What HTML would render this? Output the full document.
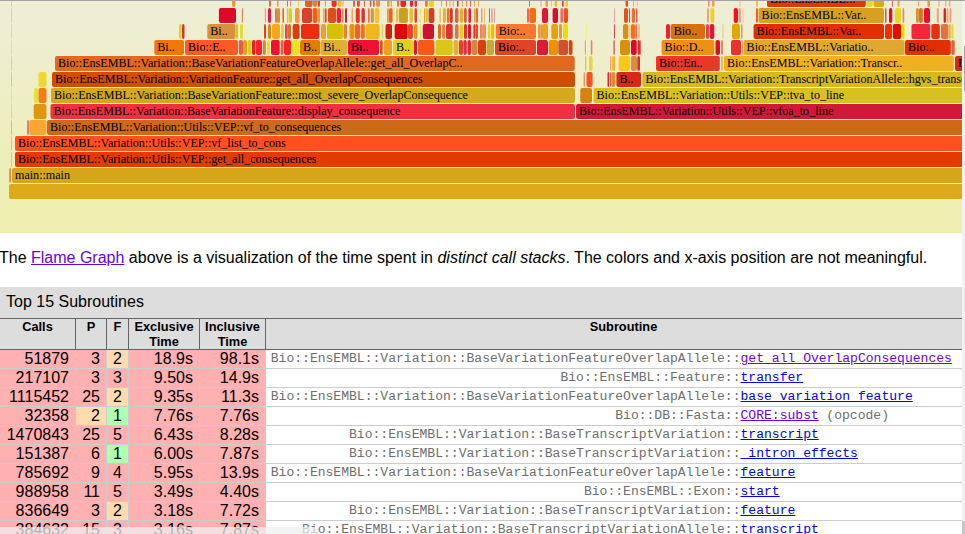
<!DOCTYPE html>
<html><head><meta charset="utf-8">
<style>
html,body{margin:0;padding:0;background:#fff;}
body{width:965px;height:534px;overflow:hidden;position:relative;font-family:"Liberation Sans",sans-serif;}
#topline{position:absolute;left:0;top:0;width:965px;z-index:5;height:1px;background:#a3a3a7;}
#fg{position:absolute;left:0;top:0;overflow:hidden;}
#fg text{font-family:"Liberation Serif",serif;font-size:12.08px;fill:#000;}
#para{position:absolute;left:-1px;top:249px;font-size:16px;line-height:18px;white-space:nowrap;color:#000;}
#para a{color:#6a00ea;text-decoration:underline;}
#caption{position:absolute;left:0;top:287px;width:962px;height:31px;background:#dddddd;}
#caption span{position:absolute;left:6px;top:6px;font-size:16px;line-height:18px;white-space:nowrap;color:#000;}
#thead{position:absolute;left:0;top:318px;width:962px;height:32px;background:#dddddd;}
.hb{position:absolute;left:0;width:962px;height:1px;background:#646464;}
.vb{position:absolute;top:318px;width:1px;height:32px;background:#646464;}
.th{position:absolute;top:320px;font-size:12.8px;font-weight:bold;line-height:14.5px;text-align:center;color:#000;}
.cell{position:absolute;}
.num{position:absolute;top:0px;font-size:16px;line-height:18px;white-space:nowrap;color:#000;}
.sub{position:absolute;left:266px;width:696px;background:#fff;}
.sub .pkg{position:absolute;right:221.5px;top:1px;font-family:"Liberation Mono",monospace;font-size:13.05px;line-height:16px;color:#6e6e6e;white-space:nowrap;}
.sub .lnk,.sub .vis{position:absolute;left:474.5px;top:1px;font-family:"Liberation Mono",monospace;font-size:13.05px;line-height:16px;text-decoration:underline;white-space:nowrap;}
.sub .op{position:absolute;top:1px;font-family:"Liberation Mono",monospace;font-size:13.05px;line-height:16px;color:#6e6e6e;white-space:pre;}
.lnk{color:#0000ee;} .vis{color:#6a00ea;}
.gl{position:absolute;left:0;width:962px;height:1px;background:#cccccc;}
.vgl{position:absolute;top:350px;width:1px;height:184px;background:#cccccc;}
#sb{position:absolute;left:962px;top:0;width:3px;height:534px;background:#f1f1f1;}
#sbt1{position:absolute;left:964px;top:46px;width:1px;height:45px;background:#a8a8a8;}
#sbt2{position:absolute;left:962px;top:521px;width:3px;height:13px;background:#c6c6c6;}
#bubble{position:absolute;left:0;top:527px;width:318px;height:7px;background:rgba(239,239,239,0.75);}
</style></head><body>
<svg id="fg" width="962" height="233">
<defs><linearGradient id="bg" x1="0" y1="0" x2="0" y2="233" gradientUnits="userSpaceOnUse">
<stop offset="0" stop-color="#eeeed8"/><stop offset="0.93" stop-color="#eeeeb0"/><stop offset="1" stop-color="#eeeeb0"/></linearGradient></defs>
<rect x="0" y="1" width="962" height="232" fill="url(#bg)"/>
<rect x="9" y="184" width="957.00" height="15" rx="2" ry="2" fill="#dcaa18"/>
<rect x="9.3" y="168" width="1.50" height="15" rx="2" ry="2" fill="#e87040"/>
<rect x="12" y="168" width="954.00" height="15" rx="2" ry="2" fill="#d4a618"/>
<text x="15.0" y="178.5">main::main</text>
<rect x="11" y="152" width="1.00" height="15" rx="2" ry="2" fill="#f09060" fill-opacity="0.55"/>
<rect x="15" y="152" width="951.00" height="15" rx="2" ry="2" fill="#e03c00"/>
<text x="18.0" y="162.5">Bio::EnsEMBL::Variation::Utils::VEP::get_all_consequences</text>
<rect x="11" y="136" width="1.00" height="15" rx="2" ry="2" fill="#f08070" fill-opacity="0.55"/>
<rect x="15" y="136" width="951.00" height="15" rx="2" ry="2" fill="#ff5020"/>
<text x="18.0" y="146.5">Bio::EnsEMBL::Variation::Utils::VEP::vf_list_to_cons</text>
<rect x="11" y="120" width="1.00" height="15" rx="2" ry="2" fill="#f07070" fill-opacity="0.55"/>
<rect x="27.2" y="120" width="1.60" height="15" rx="2" ry="2" fill="#f06040"/>
<rect x="29.3" y="120" width="17.20" height="15" rx="2" ry="2" fill="#f8a830"/>
<rect x="47" y="120" width="919.00" height="15" rx="2" ry="2" fill="#cc6a18"/>
<text x="50.0" y="130.5">Bio::EnsEMBL::Variation::Utils::VEP::vf_to_consequences</text>
<rect x="11" y="104" width="1.00" height="15" rx="2" ry="2" fill="#f0b070" fill-opacity="0.55"/>
<rect x="33.7" y="104" width="12.80" height="15" rx="2" ry="2" fill="#e0960f"/>
<rect x="50.5" y="104" width="524.50" height="15" rx="2" ry="2" fill="#f03040"/>
<text x="53.5" y="114.5">Bio::EnsEMBL::Variation::BaseVariationFeature::display_consequence</text>
<rect x="576" y="104" width="390.00" height="15" rx="2" ry="2" fill="#d01838"/>
<text x="579.0" y="114.5">Bio::EnsEMBL::Variation::Utils::VEP::vfoa_to_line</text>
<rect x="11" y="88" width="1.00" height="15" rx="2" ry="2" fill="#f0d070" fill-opacity="0.55"/>
<rect x="34.2" y="88" width="3.80" height="15" rx="2" ry="2" fill="#e8e020"/>
<rect x="38.5" y="88" width="8.00" height="15" rx="2" ry="2" fill="#f87c10"/>
<rect x="51" y="88" width="524.00" height="15" rx="2" ry="2" fill="#d4aa1c"/>
<text x="54.0" y="98.5">Bio::EnsEMBL::Variation::BaseVariationFeature::most_severe_OverlapConsequence</text>
<rect x="580.3" y="88" width="11.70" height="15" rx="2" ry="2" fill="#d88010"/>
<rect x="593.5" y="88" width="372.50" height="15" rx="2" ry="2" fill="#d8c020"/>
<text x="596.5" y="98.5">Bio::EnsEMBL::Variation::Utils::VEP::tva_to_line</text>
<rect x="11" y="72" width="1.00" height="15" rx="2" ry="2" fill="#f09070" fill-opacity="0.55"/>
<rect x="38.5" y="72" width="8.00" height="15" rx="2" ry="2" fill="#f0d830"/>
<rect x="52" y="72" width="523.00" height="15" rx="2" ry="2" fill="#d04e00"/>
<text x="55.0" y="82.5">Bio::EnsEMBL::Variation::VariationFeature::get_all_OverlapConsequences</text>
<rect x="583.6" y="72" width="1.40" height="15" rx="2" ry="2" fill="#f09060"/>
<rect x="586.5" y="72" width="6.10" height="15" rx="2" ry="2" fill="#f85020"/>
<rect x="607.5" y="72" width="1.70" height="15" rx="2" ry="2" fill="#e02030"/>
<rect x="610" y="72" width="1.00" height="15" rx="2" ry="2" fill="#e06030"/>
<rect x="611.2" y="72" width="4.10" height="15" rx="2" ry="2" fill="#d89030"/>
<rect x="616.4" y="72" width="24.60" height="15" rx="2" ry="2" fill="#d82818"/>
<text x="619.4" y="82.5">B..</text>
<rect x="642.5" y="72" width="323.50" height="15" rx="2" ry="2" fill="#d8b820"/>
<text x="645.5" y="82.5">Bio::EnsEMBL::Variation::TranscriptVariationAllele::hgvs_transcript</text>
<rect x="11" y="56" width="1.00" height="15" rx="2" ry="2" fill="#f0a070" fill-opacity="0.55"/>
<rect x="55" y="56" width="519.70" height="15" rx="2" ry="2" fill="#e06820"/>
<text x="58.0" y="66.5">Bio::EnsEMBL::Variation::BaseVariationFeatureOverlapAllele::get_all_OverlapC..</text>
<rect x="585" y="56" width="1.40" height="15" rx="2" ry="2" fill="#f0c040"/>
<rect x="589" y="56" width="3.60" height="15" rx="2" ry="2" fill="#e0d840"/>
<rect x="610" y="56" width="1.00" height="15" rx="2" ry="2" fill="#f0a080"/>
<rect x="611.6" y="56" width="1.40" height="15" rx="2" ry="2" fill="#f0c040"/>
<rect x="613" y="56" width="2.30" height="15" rx="2" ry="2" fill="#e8b830"/>
<rect x="618.7" y="56" width="11.20" height="15" rx="2" ry="2" fill="#f8c818"/>
<rect x="630.8" y="56" width="6.20" height="15" rx="2" ry="2" fill="#d89040"/>
<rect x="637.3" y="56" width="2.70" height="15" rx="2" ry="2" fill="#e02838"/>
<rect x="656" y="56" width="63.80" height="15" rx="2" ry="2" fill="#e83828"/>
<text x="659.0" y="66.5">Bio::En..</text>
<rect x="721" y="56" width="2.00" height="15" rx="2" ry="2" fill="#e0c060"/>
<rect x="724" y="56" width="229.80" height="15" rx="2" ry="2" fill="#f0b020"/>
<text x="727.0" y="66.5">Bio::EnsEMBL::Variation::Transcr..</text>
<rect x="955" y="56" width="20.00" height="15" rx="2" ry="2" fill="#d82818"/>
<text x="958.0" y="66.5">Bio::..</text>
<rect x="11" y="40" width="1.00" height="15" rx="2" ry="2" fill="#f0c080" fill-opacity="0.55"/>
<rect x="154.3" y="40" width="29.70" height="15" rx="2" ry="2" fill="#f07800"/>
<text x="157.3" y="50.5">Bi..</text>
<rect x="185" y="40" width="53.00" height="15" rx="2" ry="2" fill="#ff5a28"/>
<text x="188.0" y="50.5">Bio::E..</text>
<rect x="238.8" y="40" width="4.20" height="15" rx="2" ry="2" fill="#e86040"/>
<rect x="243" y="40" width="4.00" height="15" rx="2" ry="2" fill="#e8a020"/>
<rect x="247.6" y="40" width="4.10" height="15" rx="2" ry="2" fill="#d8d020"/>
<rect x="252" y="40" width="3.40" height="15" rx="2" ry="2" fill="#e02010"/>
<rect x="255.8" y="40" width="6.20" height="15" rx="2" ry="2" fill="#ff2030"/>
<rect x="262.8" y="40" width="3.20" height="15" rx="2" ry="2" fill="#d09040"/>
<rect x="267" y="40" width="3.00" height="15" rx="2" ry="2" fill="#e8e020"/>
<rect x="271" y="40" width="8.70" height="15" rx="2" ry="2" fill="#f01030"/>
<rect x="280.7" y="40" width="2.80" height="15" rx="2" ry="2" fill="#e86040"/>
<rect x="284" y="40" width="7.00" height="15" rx="2" ry="2" fill="#ff2020"/>
<rect x="292" y="40" width="7.00" height="15" rx="2" ry="2" fill="#f0e020"/>
<rect x="300" y="40" width="20.00" height="15" rx="2" ry="2" fill="#e07e00"/>
<text x="303.0" y="50.5">B..</text>
<rect x="320.3" y="40" width="26.90" height="15" rx="2" ry="2" fill="#e0b030"/>
<text x="323.3" y="50.5">Bi..</text>
<rect x="348" y="40" width="31.00" height="15" rx="2" ry="2" fill="#f01038"/>
<text x="351.0" y="50.5">Bi..</text>
<rect x="380" y="40" width="2.70" height="15" rx="2" ry="2" fill="#e85010"/>
<rect x="383.8" y="40" width="8.20" height="15" rx="2" ry="2" fill="#f0a020"/>
<rect x="393" y="40" width="20.00" height="15" rx="2" ry="2" fill="#e0d020"/>
<text x="396.0" y="50.5">B..</text>
<rect x="413.7" y="40" width="3.30" height="15" rx="2" ry="2" fill="#d81838"/>
<rect x="418" y="40" width="16.40" height="15" rx="2" ry="2" fill="#f85818"/>
<rect x="435.6" y="40" width="17.10" height="15" rx="2" ry="2" fill="#d8c818"/>
<rect x="453.5" y="40" width="5.00" height="15" rx="2" ry="2" fill="#e0b040"/>
<rect x="459" y="40" width="4.00" height="15" rx="2" ry="2" fill="#e84020"/>
<rect x="463.4" y="40" width="3.40" height="15" rx="2" ry="2" fill="#e03040"/>
<rect x="467.6" y="40" width="3.40" height="15" rx="2" ry="2" fill="#f02030"/>
<rect x="471.7" y="40" width="5.90" height="15" rx="2" ry="2" fill="#d08840"/>
<rect x="478" y="40" width="8.00" height="15" rx="2" ry="2" fill="#d84010"/>
<rect x="486.6" y="40" width="7.40" height="15" rx="2" ry="2" fill="#c8a838"/>
<rect x="495" y="40" width="41.00" height="15" rx="2" ry="2" fill="#e04428"/>
<text x="498.0" y="50.5">Bio:..</text>
<rect x="537" y="40" width="11.00" height="15" rx="2" ry="2" fill="#e01838"/>
<rect x="548.8" y="40" width="9.20" height="15" rx="2" ry="2" fill="#f09000"/>
<rect x="558.3" y="40" width="9.70" height="15" rx="2" ry="2" fill="#d05030"/>
<rect x="568.7" y="40" width="3.80" height="15" rx="2" ry="2" fill="#d84010"/>
<rect x="584.8" y="40" width="1.20" height="15" rx="2" ry="2" fill="#f0a080"/>
<rect x="590.8" y="40" width="1.60" height="15" rx="2" ry="2" fill="#f08060"/>
<rect x="613.5" y="40" width="1.20" height="15" rx="2" ry="2" fill="#e04040"/>
<rect x="620" y="40" width="10.00" height="15" rx="2" ry="2" fill="#d89010"/>
<rect x="631" y="40" width="5.70" height="15" rx="2" ry="2" fill="#e00828"/>
<rect x="637.5" y="40" width="2.50" height="15" rx="2" ry="2" fill="#e03020"/>
<rect x="640" y="40" width="1.00" height="15" rx="2" ry="2" fill="#f06060"/>
<rect x="661.6" y="40" width="52.70" height="15" rx="2" ry="2" fill="#f09010"/>
<text x="664.6" y="50.5">Bio::D..</text>
<rect x="715.5" y="40" width="4.50" height="15" rx="2" ry="2" fill="#e01020"/>
<rect x="721" y="40" width="2.00" height="15" rx="2" ry="2" fill="#f08060"/>
<rect x="731" y="40" width="10.00" height="15" rx="2" ry="2" fill="#f03030"/>
<rect x="742" y="40" width="1.00" height="15" rx="2" ry="2" fill="#f0a040"/>
<rect x="743.6" y="40" width="161.00" height="15" rx="2" ry="2" fill="#e0a830"/>
<text x="746.6" y="50.5">Bio::EnsEMBL::Variatio..</text>
<rect x="905" y="40" width="45.80" height="15" rx="2" ry="2" fill="#e03000"/>
<text x="908.0" y="50.5">Bio:..</text>
<rect x="951.3" y="40" width="3.40" height="15" rx="2" ry="2" fill="#e06040"/>
<rect x="11" y="24" width="1.00" height="15" rx="2" ry="2" fill="#f0b090" fill-opacity="0.55"/>
<rect x="179" y="24" width="2.50" height="15" rx="2" ry="2" fill="#e0d020"/>
<rect x="182" y="24" width="2.50" height="15" rx="2" ry="2" fill="#e03030"/>
<rect x="207.3" y="24" width="28.20" height="15" rx="2" ry="2" fill="#d89040"/>
<text x="210.3" y="34.5">Bi..</text>
<rect x="236" y="24" width="2.00" height="15" rx="2" ry="2" fill="#d8c020"/>
<rect x="240" y="24" width="3.00" height="15" rx="2" ry="2" fill="#e0e030"/>
<rect x="264" y="24" width="2.00" height="15" rx="2" ry="2" fill="#e04020"/>
<rect x="268" y="24" width="3.00" height="15" rx="2" ry="2" fill="#e08020"/>
<rect x="272" y="24" width="8.00" height="15" rx="2" ry="2" fill="#f8a818"/>
<rect x="281" y="24" width="3.00" height="15" rx="2" ry="2" fill="#d8d840"/>
<rect x="285" y="24" width="2.70" height="15" rx="2" ry="2" fill="#e84060"/>
<rect x="288" y="24" width="3.00" height="15" rx="2" ry="2" fill="#d87020"/>
<rect x="292.7" y="24" width="6.90" height="15" rx="2" ry="2" fill="#d84010"/>
<rect x="301" y="24" width="18.40" height="15" rx="2" ry="2" fill="#e83010"/>
<rect x="321" y="24" width="5.00" height="15" rx="2" ry="2" fill="#f0a030"/>
<rect x="327" y="24" width="16.00" height="15" rx="2" ry="2" fill="#d8c000"/>
<rect x="343.5" y="24" width="3.50" height="15" rx="2" ry="2" fill="#e88040"/>
<rect x="349.5" y="24" width="5.00" height="15" rx="2" ry="2" fill="#f09000"/>
<rect x="355" y="24" width="5.00" height="15" rx="2" ry="2" fill="#f06030"/>
<rect x="360.6" y="24" width="4.20" height="15" rx="2" ry="2" fill="#f07020"/>
<rect x="365.6" y="24" width="14.10" height="15" rx="2" ry="2" fill="#f0b818"/>
<rect x="381.7" y="24" width="1.60" height="15" rx="2" ry="2" fill="#e0d060"/>
<rect x="385.5" y="24" width="6.50" height="15" rx="2" ry="2" fill="#d02010"/>
<rect x="394.6" y="24" width="13.00" height="15" rx="2" ry="2" fill="#e00808"/>
<rect x="408" y="24" width="4.90" height="15" rx="2" ry="2" fill="#f04020"/>
<rect x="414" y="24" width="3.50" height="15" rx="2" ry="2" fill="#f09020"/>
<rect x="420" y="24" width="1.50" height="15" rx="2" ry="2" fill="#f0e060"/>
<rect x="422.8" y="24" width="11.20" height="15" rx="2" ry="2" fill="#d01030"/>
<rect x="438" y="24" width="3.00" height="15" rx="2" ry="2" fill="#d87020"/>
<rect x="442" y="24" width="3.00" height="15" rx="2" ry="2" fill="#f08040"/>
<rect x="446" y="24" width="6.70" height="15" rx="2" ry="2" fill="#e03030"/>
<rect x="455" y="24" width="3.50" height="15" rx="2" ry="2" fill="#e07050"/>
<rect x="459.6" y="24" width="3.40" height="15" rx="2" ry="2" fill="#e8d020"/>
<rect x="464" y="24" width="3.00" height="15" rx="2" ry="2" fill="#e83020"/>
<rect x="468" y="24" width="3.00" height="15" rx="2" ry="2" fill="#e01030"/>
<rect x="473.4" y="24" width="1.60" height="15" rx="2" ry="2" fill="#e83020"/>
<rect x="475.3" y="24" width="2.70" height="15" rx="2" ry="2" fill="#e05010"/>
<rect x="480" y="24" width="2.80" height="15" rx="2" ry="2" fill="#f08060"/>
<rect x="483" y="24" width="3.00" height="15" rx="2" ry="2" fill="#f09060"/>
<rect x="488" y="24" width="2.40" height="15" rx="2" ry="2" fill="#f0d020"/>
<rect x="491" y="24" width="3.30" height="15" rx="2" ry="2" fill="#f0c000"/>
<rect x="495.8" y="24" width="40.20" height="15" rx="2" ry="2" fill="#f87830"/>
<text x="498.8" y="34.5">Bio:..</text>
<rect x="538" y="24" width="2.00" height="15" rx="2" ry="2" fill="#e0a020"/>
<rect x="540.5" y="24" width="1.20" height="15" rx="2" ry="2" fill="#e06030"/>
<rect x="542" y="24" width="6.00" height="15" rx="2" ry="2" fill="#f0a020"/>
<rect x="551.3" y="24" width="6.70" height="15" rx="2" ry="2" fill="#e8a010"/>
<rect x="559" y="24" width="3.00" height="15" rx="2" ry="2" fill="#f09040"/>
<rect x="563" y="24" width="5.00" height="15" rx="2" ry="2" fill="#e8e000"/>
<rect x="586" y="24" width="1.00" height="15" rx="2" ry="2" fill="#f0f080"/>
<rect x="614" y="24" width="1.00" height="15" rx="2" ry="2" fill="#e04040"/>
<rect x="623" y="24" width="5.40" height="15" rx="2" ry="2" fill="#d89018"/>
<rect x="629.5" y="24" width="1.00" height="15" rx="2" ry="2" fill="#f0c050"/>
<rect x="631" y="24" width="4.00" height="15" rx="2" ry="2" fill="#f07020"/>
<rect x="635.5" y="24" width="1.20" height="15" rx="2" ry="2" fill="#e03030"/>
<rect x="637.5" y="24" width="2.50" height="15" rx="2" ry="2" fill="#f8c080"/>
<rect x="666" y="24" width="4.00" height="15" rx="2" ry="2" fill="#f02030"/>
<rect x="670.7" y="24" width="34.30" height="15" rx="2" ry="2" fill="#d87010"/>
<text x="673.7" y="34.5">Bio..</text>
<rect x="706" y="24" width="3.00" height="15" rx="2" ry="2" fill="#f04040"/>
<rect x="709.7" y="24" width="4.60" height="15" rx="2" ry="2" fill="#e01838"/>
<rect x="722.5" y="24" width="1.00" height="15" rx="2" ry="2" fill="#f0c080"/>
<rect x="732" y="24" width="8.00" height="15" rx="2" ry="2" fill="#e0a800"/>
<rect x="741" y="24" width="1.50" height="15" rx="2" ry="2" fill="#f09060"/>
<rect x="753.6" y="24" width="130.40" height="15" rx="2" ry="2" fill="#e03000"/>
<text x="756.6" y="34.5">Bio::EnsEMBL::Var..</text>
<rect x="885" y="24" width="7.00" height="15" rx="2" ry="2" fill="#f03000"/>
<rect x="892.8" y="24" width="8.40" height="15" rx="2" ry="2" fill="#e01000"/>
<rect x="901.7" y="24" width="2.90" height="15" rx="2" ry="2" fill="#f0e000"/>
<rect x="911.5" y="24" width="18.80" height="15" rx="2" ry="2" fill="#f02838"/>
<rect x="931.3" y="24" width="8.50" height="15" rx="2" ry="2" fill="#e83010"/>
<rect x="941" y="24" width="7.40" height="15" rx="2" ry="2" fill="#e87040"/>
<rect x="948.7" y="24" width="2.10" height="15" rx="2" ry="2" fill="#f0b040"/>
<rect x="951.3" y="24" width="2.20" height="15" rx="2" ry="2" fill="#d8e040"/>
<rect x="11" y="8" width="1.00" height="15" rx="2" ry="2" fill="#f0a080" fill-opacity="0.55"/>
<rect x="218.9" y="8" width="17.10" height="15" rx="2" ry="2" fill="#e00828"/>
<rect x="241.8" y="8" width="1.20" height="15" rx="2" ry="2" fill="#f08060"/>
<rect x="264.8" y="8" width="1.20" height="15" rx="2" ry="2" fill="#f0a060"/>
<rect x="268" y="8" width="3.00" height="15" rx="2" ry="2" fill="#e01848"/>
<rect x="275" y="8" width="2.00" height="15" rx="2" ry="2" fill="#e08040"/>
<rect x="277" y="8" width="3.00" height="15" rx="2" ry="2" fill="#d89040"/>
<rect x="282.4" y="8" width="1.60" height="15" rx="2" ry="2" fill="#e86030"/>
<rect x="286.9" y="8" width="1.60" height="15" rx="2" ry="2" fill="#f0c020"/>
<rect x="289" y="8" width="3.00" height="15" rx="2" ry="2" fill="#d0d030"/>
<rect x="295" y="8" width="4.60" height="15" rx="2" ry="2" fill="#f89040"/>
<rect x="302" y="8" width="10.00" height="15" rx="2" ry="2" fill="#d84030"/>
<rect x="312.6" y="8" width="4.90" height="15" rx="2" ry="2" fill="#f06010"/>
<rect x="318" y="8" width="2.00" height="15" rx="2" ry="2" fill="#f09040"/>
<rect x="323" y="8" width="1.60" height="15" rx="2" ry="2" fill="#f0a060"/>
<rect x="325" y="8" width="1.60" height="15" rx="2" ry="2" fill="#e04020"/>
<rect x="328" y="8" width="8.00" height="15" rx="2" ry="2" fill="#d85018"/>
<rect x="336.6" y="8" width="4.40" height="15" rx="2" ry="2" fill="#f02030"/>
<rect x="342" y="8" width="1.50" height="15" rx="2" ry="2" fill="#f08050"/>
<rect x="345" y="8" width="2.00" height="15" rx="2" ry="2" fill="#d01838"/>
<rect x="351.5" y="8" width="1.50" height="15" rx="2" ry="2" fill="#f0a060"/>
<rect x="355.7" y="8" width="4.10" height="15" rx="2" ry="2" fill="#f03020"/>
<rect x="361.5" y="8" width="3.30" height="15" rx="2" ry="2" fill="#e02838"/>
<rect x="368" y="8" width="1.80" height="15" rx="2" ry="2" fill="#f07050"/>
<rect x="370.6" y="8" width="3.40" height="15" rx="2" ry="2" fill="#c8a040"/>
<rect x="374.7" y="8" width="4.70" height="15" rx="2" ry="2" fill="#f8c030"/>
<rect x="387" y="8" width="1.80" height="15" rx="2" ry="2" fill="#f09040"/>
<rect x="389" y="8" width="3.60" height="15" rx="2" ry="2" fill="#f06020"/>
<rect x="396" y="8" width="2.00" height="15" rx="2" ry="2" fill="#f0c030"/>
<rect x="398.8" y="8" width="9.10" height="15" rx="2" ry="2" fill="#c8a020"/>
<rect x="409.5" y="8" width="3.40" height="15" rx="2" ry="2" fill="#e0c030"/>
<rect x="414.5" y="8" width="2.50" height="15" rx="2" ry="2" fill="#f04020"/>
<rect x="419.5" y="8" width="1.50" height="15" rx="2" ry="2" fill="#f0e080"/>
<rect x="424" y="8" width="1.20" height="15" rx="2" ry="2" fill="#f0a020"/>
<rect x="425.7" y="8" width="2.10" height="15" rx="2" ry="2" fill="#d0c020"/>
<rect x="428.6" y="8" width="5.80" height="15" rx="2" ry="2" fill="#d04020"/>
<rect x="439.4" y="8" width="1.60" height="15" rx="2" ry="2" fill="#f0c060"/>
<rect x="443" y="8" width="3.00" height="15" rx="2" ry="2" fill="#f0b030"/>
<rect x="446.9" y="8" width="2.50" height="15" rx="2" ry="2" fill="#f07020"/>
<rect x="449.8" y="8" width="2.90" height="15" rx="2" ry="2" fill="#e03020"/>
<rect x="455" y="8" width="3.50" height="15" rx="2" ry="2" fill="#e06040"/>
<rect x="460" y="8" width="3.00" height="15" rx="2" ry="2" fill="#e8b030"/>
<rect x="464" y="8" width="2.80" height="15" rx="2" ry="2" fill="#e06030"/>
<rect x="468.4" y="8" width="2.60" height="15" rx="2" ry="2" fill="#d82040"/>
<rect x="474" y="8" width="1.00" height="15" rx="2" ry="2" fill="#f0a040"/>
<rect x="475.5" y="8" width="2.50" height="15" rx="2" ry="2" fill="#e07030"/>
<rect x="481" y="8" width="1.50" height="15" rx="2" ry="2" fill="#f09090"/>
<rect x="484" y="8" width="1.00" height="15" rx="2" ry="2" fill="#f0c060"/>
<rect x="489" y="8" width="1.00" height="15" rx="2" ry="2" fill="#e05050"/>
<rect x="491.6" y="8" width="0.80" height="15" rx="2" ry="2" fill="#e05050"/>
<rect x="494" y="8" width="1.00" height="15" rx="2" ry="2" fill="#f0a0a0"/>
<rect x="527" y="8" width="2.00" height="15" rx="2" ry="2" fill="#f86060"/>
<rect x="529.4" y="8" width="6.60" height="15" rx="2" ry="2" fill="#f07010"/>
<rect x="542" y="8" width="6.00" height="15" rx="2" ry="2" fill="#e01838"/>
<rect x="552.6" y="8" width="5.40" height="15" rx="2" ry="2" fill="#d81030"/>
<rect x="560.4" y="8" width="2.60" height="15" rx="2" ry="2" fill="#e87060"/>
<rect x="563.7" y="8" width="4.30" height="15" rx="2" ry="2" fill="#f05020"/>
<rect x="614" y="8" width="1.00" height="15" rx="2" ry="2" fill="#f0a0a0"/>
<rect x="624" y="8" width="4.00" height="15" rx="2" ry="2" fill="#e05020"/>
<rect x="629" y="8" width="1.00" height="15" rx="2" ry="2" fill="#e04040"/>
<rect x="631.7" y="8" width="3.30" height="15" rx="2" ry="2" fill="#f07030"/>
<rect x="636" y="8" width="1.50" height="15" rx="2" ry="2" fill="#e06050"/>
<rect x="707" y="8" width="2.00" height="15" rx="2" ry="2" fill="#f0a080"/>
<rect x="710.5" y="8" width="3.80" height="15" rx="2" ry="2" fill="#f0d020"/>
<rect x="733.7" y="8" width="4.30" height="15" rx="2" ry="2" fill="#f01020"/>
<rect x="738.7" y="8" width="2.30" height="15" rx="2" ry="2" fill="#f0a080"/>
<rect x="742.5" y="8" width="1.00" height="15" rx="2" ry="2" fill="#f0c0a0"/>
<rect x="756" y="8" width="2.00" height="15" rx="2" ry="2" fill="#f06020"/>
<rect x="758.6" y="8" width="125.40" height="15" rx="2" ry="2" fill="#d8a020"/>
<text x="761.6" y="18.5">Bio::EnsEMBL::Var..</text>
<rect x="885" y="8" width="1.50" height="15" rx="2" ry="2" fill="#e05050"/>
<rect x="889" y="8" width="3.30" height="15" rx="2" ry="2" fill="#e01020"/>
<rect x="895" y="8" width="6.00" height="15" rx="2" ry="2" fill="#e8d820"/>
<rect x="902.6" y="8" width="1.70" height="15" rx="2" ry="2" fill="#f08080"/>
<rect x="916" y="8" width="2.80" height="15" rx="2" ry="2" fill="#d89030"/>
<rect x="919" y="8" width="3.80" height="15" rx="2" ry="2" fill="#e07010"/>
<rect x="924" y="8" width="6.00" height="15" rx="2" ry="2" fill="#e81030"/>
<rect x="936.8" y="8" width="2.00" height="15" rx="2" ry="2" fill="#f0a080"/>
<rect x="943.6" y="8" width="2.40" height="15" rx="2" ry="2" fill="#e02030"/>
<rect x="946.7" y="8" width="1.70" height="15" rx="2" ry="2" fill="#f0b030"/>
<rect x="949.6" y="8" width="1.70" height="15" rx="2" ry="2" fill="#f09090"/>
<rect x="11" y="-8" width="1.00" height="15" rx="2" ry="2" fill="#f0a070" fill-opacity="0.55"/>
<rect x="232" y="-8" width="3.50" height="15" rx="2" ry="2" fill="#e0a030"/>
<rect x="269" y="-8" width="2.00" height="15" rx="2" ry="2" fill="#e07020"/>
<rect x="277" y="-8" width="1.60" height="15" rx="2" ry="2" fill="#f0a040"/>
<rect x="287" y="-8" width="1.00" height="15" rx="2" ry="2" fill="#e06060"/>
<rect x="290" y="-8" width="1.00" height="15" rx="2" ry="2" fill="#f09090"/>
<rect x="298" y="-8" width="1.00" height="15" rx="2" ry="2" fill="#f0d060"/>
<rect x="305" y="-8" width="7.60" height="15" rx="2" ry="2" fill="#e06020"/>
<rect x="313" y="-8" width="4.00" height="15" rx="2" ry="2" fill="#e08040"/>
<rect x="317.5" y="-8" width="2.50" height="15" rx="2" ry="2" fill="#d05030"/>
<rect x="325" y="-8" width="1.00" height="15" rx="2" ry="2" fill="#f09040"/>
<rect x="331.6" y="-8" width="5.00" height="15" rx="2" ry="2" fill="#f03020"/>
<rect x="338" y="-8" width="3.50" height="15" rx="2" ry="2" fill="#e8c030"/>
<rect x="342.4" y="-8" width="1.00" height="15" rx="2" ry="2" fill="#f0a060"/>
<rect x="353" y="-8" width="2.00" height="15" rx="2" ry="2" fill="#e06060"/>
<rect x="357" y="-8" width="2.80" height="15" rx="2" ry="2" fill="#f04030"/>
<rect x="364" y="-8" width="1.00" height="15" rx="2" ry="2" fill="#e06040"/>
<rect x="369.8" y="-8" width="1.60" height="15" rx="2" ry="2" fill="#e05050"/>
<rect x="373" y="-8" width="1.70" height="15" rx="2" ry="2" fill="#e06030"/>
<rect x="376" y="-8" width="4.00" height="15" rx="2" ry="2" fill="#f09040"/>
<rect x="387" y="-8" width="2.60" height="15" rx="2" ry="2" fill="#f0a040"/>
<rect x="390.5" y="-8" width="1.50" height="15" rx="2" ry="2" fill="#f0b040"/>
<rect x="397" y="-8" width="2.00" height="15" rx="2" ry="2" fill="#f07030"/>
<rect x="400.4" y="-8" width="5.60" height="15" rx="2" ry="2" fill="#f02030"/>
<rect x="410" y="-8" width="3.00" height="15" rx="2" ry="2" fill="#e02040"/>
<rect x="414.5" y="-8" width="2.50" height="15" rx="2" ry="2" fill="#f03030"/>
<rect x="425" y="-8" width="2.80" height="15" rx="2" ry="2" fill="#f07060"/>
<rect x="428.6" y="-8" width="5.40" height="15" rx="2" ry="2" fill="#f0d020"/>
<rect x="441" y="-8" width="1.00" height="15" rx="2" ry="2" fill="#f0a060"/>
<rect x="446" y="-8" width="1.00" height="15" rx="2" ry="2" fill="#f08060"/>
<rect x="449.4" y="-8" width="1.00" height="15" rx="2" ry="2" fill="#f0a040"/>
<rect x="452.7" y="-8" width="1.00" height="15" rx="2" ry="2" fill="#f09060"/>
<rect x="457" y="-8" width="1.50" height="15" rx="2" ry="2" fill="#e02020"/>
<rect x="462" y="-8" width="1.00" height="15" rx="2" ry="2" fill="#f0a060"/>
<rect x="466" y="-8" width="1.00" height="15" rx="2" ry="2" fill="#f08040"/>
<rect x="470" y="-8" width="1.00" height="15" rx="2" ry="2" fill="#e06060"/>
<rect x="474" y="-8" width="1.00" height="15" rx="2" ry="2" fill="#f0a060"/>
<rect x="478" y="-8" width="1.00" height="15" rx="2" ry="2" fill="#f0b060"/>
<rect x="529" y="-8" width="1.00" height="15" rx="2" ry="2" fill="#e06060"/>
<rect x="540.5" y="-8" width="1.00" height="15" rx="2" ry="2" fill="#f0a080"/>
<rect x="545.5" y="-8" width="2.50" height="15" rx="2" ry="2" fill="#f0a040"/>
<rect x="551" y="-8" width="1.00" height="15" rx="2" ry="2" fill="#f0c080"/>
<rect x="554.6" y="-8" width="2.40" height="15" rx="2" ry="2" fill="#f0c020"/>
<rect x="562" y="-8" width="1.70" height="15" rx="2" ry="2" fill="#e04040"/>
<rect x="565.4" y="-8" width="2.60" height="15" rx="2" ry="2" fill="#f0d020"/>
<rect x="625.6" y="-8" width="2.40" height="15" rx="2" ry="2" fill="#e05010"/>
<rect x="633" y="-8" width="1.00" height="15" rx="2" ry="2" fill="#f0a080"/>
<rect x="636.7" y="-8" width="1.00" height="15" rx="2" ry="2" fill="#f0b0a0"/>
<rect x="708" y="-8" width="1.60" height="15" rx="2" ry="2" fill="#f09070"/>
<rect x="712" y="-8" width="2.60" height="15" rx="2" ry="2" fill="#f0a050"/>
<rect x="739.5" y="-8" width="1.00" height="15" rx="2" ry="2" fill="#f0c080"/>
<rect x="756" y="-8" width="2.00" height="15" rx="2" ry="2" fill="#f0c040"/>
<rect x="767" y="-8" width="98.80" height="15" rx="2" ry="2" fill="#e03800"/>
<text x="770.0" y="2.5">Bio::EnsEMBL:..</text>
<rect x="866.7" y="-8" width="6.00" height="15" rx="2" ry="2" fill="#e8d820"/>
<rect x="873.5" y="-8" width="10.50" height="15" rx="2" ry="2" fill="#e0a810"/>
<rect x="892" y="-8" width="1.00" height="15" rx="2" ry="2" fill="#f06060"/>
<rect x="897.5" y="-8" width="2.00" height="15" rx="2" ry="2" fill="#f0a040"/>
<rect x="918" y="-8" width="1.00" height="15" rx="2" ry="2" fill="#f0a080"/>
<rect x="927.4" y="-8" width="2.60" height="15" rx="2" ry="2" fill="#e8a020"/>
<rect x="938.5" y="-8" width="1.00" height="15" rx="2" ry="2" fill="#f0a080"/>
<rect x="945.3" y="-8" width="1.00" height="15" rx="2" ry="2" fill="#f0a080"/>
<rect x="948.7" y="-8" width="1.70" height="15" rx="2" ry="2" fill="#f0b080"/>
</svg>
<div id="topline"></div>
<div id="para">The <a>Flame Graph</a> above is a visualization of the time spent in <i>distinct call stacks</i>. The colors and x-axis position are not meaningful.</div>
<div id="caption"><span>Top 15 Subroutines</span></div>
<div id="thead"></div>
<div class="hb" style="top:318px"></div>
<div class="hb" style="top:349px"></div>
<div class="vb" style="left:75px"></div>
<div class="vb" style="left:106px"></div>
<div class="vb" style="left:128px"></div>
<div class="vb" style="left:199px"></div>
<div class="vb" style="left:265px"></div>
<div class="th" style="left:0;width:75px">Calls</div>
<div class="th" style="left:76px;width:30px">P</div>
<div class="th" style="left:107px;width:21px">F</div>
<div class="th" style="left:129px;width:70px">Exclusive<br>Time</div>
<div class="th" style="left:200px;width:65px">Inclusive<br>Time</div>
<div class="th" style="left:266px;width:715px">Subroutine</div>
<div class="cell" style="left:0px;top:350px;width:75px;height:18px;background:#ffb0b0"><span class="num" style="right:6px">51879</span></div>
<div class="cell" style="left:76px;top:350px;width:30px;height:18px;background:#ffb0b0"><span class="num" style="right:6px">3</span></div>
<div class="cell" style="left:107px;top:350px;width:21px;height:18px;background:#ffdcb0"><span class="num" style="right:6px">2</span></div>
<div class="cell" style="left:129px;top:350px;width:70px;height:18px;background:#ffb0b0"><span class="num" style="right:6px">18.9s</span></div>
<div class="cell" style="left:200px;top:350px;width:65px;height:18px;background:#ffb0b0"><span class="num" style="right:6px">98.1s</span></div>
<div class="sub" style="top:350px;height:18px"><span class="pkg">Bio::EnsEMBL::Variation::BaseVariationFeatureOverlapAllele::</span><span class="vis">get_all_OverlapConsequences</span></div>
<div class="cell" style="left:0px;top:369px;width:75px;height:18px;background:#ffb0b0"><span class="num" style="right:6px">217107</span></div>
<div class="cell" style="left:76px;top:369px;width:30px;height:18px;background:#ffb0b0"><span class="num" style="right:6px">3</span></div>
<div class="cell" style="left:107px;top:369px;width:21px;height:18px;background:#ffb0b0"><span class="num" style="right:6px">3</span></div>
<div class="cell" style="left:129px;top:369px;width:70px;height:18px;background:#ffb0b0"><span class="num" style="right:6px">9.50s</span></div>
<div class="cell" style="left:200px;top:369px;width:65px;height:18px;background:#ffb0b0"><span class="num" style="right:6px">14.9s</span></div>
<div class="sub" style="top:369px;height:18px"><span class="pkg">Bio::EnsEMBL::Feature::</span><span class="lnk">transfer</span></div>
<div class="cell" style="left:0px;top:388px;width:75px;height:18px;background:#ffb0b0"><span class="num" style="right:6px">1115452</span></div>
<div class="cell" style="left:76px;top:388px;width:30px;height:18px;background:#ffb0b0"><span class="num" style="right:6px">25</span></div>
<div class="cell" style="left:107px;top:388px;width:21px;height:18px;background:#ffdcb0"><span class="num" style="right:6px">2</span></div>
<div class="cell" style="left:129px;top:388px;width:70px;height:18px;background:#ffb0b0"><span class="num" style="right:6px">9.35s</span></div>
<div class="cell" style="left:200px;top:388px;width:65px;height:18px;background:#ffb0b0"><span class="num" style="right:6px">11.3s</span></div>
<div class="sub" style="top:388px;height:18px"><span class="pkg">Bio::EnsEMBL::Variation::BaseVariationFeatureOverlapAllele::</span><span class="lnk">base_variation_feature</span></div>
<div class="cell" style="left:0px;top:407px;width:75px;height:18px;background:#ffb0b0"><span class="num" style="right:6px">32358</span></div>
<div class="cell" style="left:76px;top:407px;width:30px;height:18px;background:#ffdcb0"><span class="num" style="right:6px">2</span></div>
<div class="cell" style="left:107px;top:407px;width:21px;height:18px;background:#b0ffb0"><span class="num" style="right:6px">1</span></div>
<div class="cell" style="left:129px;top:407px;width:70px;height:18px;background:#ffb0b0"><span class="num" style="right:6px">7.76s</span></div>
<div class="cell" style="left:200px;top:407px;width:65px;height:18px;background:#ffb0b0"><span class="num" style="right:6px">7.76s</span></div>
<div class="sub" style="top:407px;height:18px"><span class="pkg">Bio::DB::Fasta::</span><span class="vis">CORE:subst</span><span class="op" style="left:552.5px"> (opcode)</span></div>
<div class="cell" style="left:0px;top:426px;width:75px;height:18px;background:#ffb0b0"><span class="num" style="right:6px">1470843</span></div>
<div class="cell" style="left:76px;top:426px;width:30px;height:18px;background:#ffb0b0"><span class="num" style="right:6px">25</span></div>
<div class="cell" style="left:107px;top:426px;width:21px;height:18px;background:#ffb0b0"><span class="num" style="right:6px">5</span></div>
<div class="cell" style="left:129px;top:426px;width:70px;height:18px;background:#ffb0b0"><span class="num" style="right:6px">6.43s</span></div>
<div class="cell" style="left:200px;top:426px;width:65px;height:18px;background:#ffb0b0"><span class="num" style="right:6px">8.28s</span></div>
<div class="sub" style="top:426px;height:18px"><span class="pkg">Bio::EnsEMBL::Variation::BaseTranscriptVariation::</span><span class="lnk">transcript</span></div>
<div class="cell" style="left:0px;top:445px;width:75px;height:18px;background:#ffb0b0"><span class="num" style="right:6px">151387</span></div>
<div class="cell" style="left:76px;top:445px;width:30px;height:18px;background:#ffb0b0"><span class="num" style="right:6px">6</span></div>
<div class="cell" style="left:107px;top:445px;width:21px;height:18px;background:#b0ffb0"><span class="num" style="right:6px">1</span></div>
<div class="cell" style="left:129px;top:445px;width:70px;height:18px;background:#ffb0b0"><span class="num" style="right:6px">6.00s</span></div>
<div class="cell" style="left:200px;top:445px;width:65px;height:18px;background:#ffb0b0"><span class="num" style="right:6px">7.87s</span></div>
<div class="sub" style="top:445px;height:18px"><span class="pkg">Bio::EnsEMBL::Variation::BaseTranscriptVariation::</span><span class="lnk">_intron_effects</span></div>
<div class="cell" style="left:0px;top:464px;width:75px;height:18px;background:#ffb0b0"><span class="num" style="right:6px">785692</span></div>
<div class="cell" style="left:76px;top:464px;width:30px;height:18px;background:#ffb0b0"><span class="num" style="right:6px">9</span></div>
<div class="cell" style="left:107px;top:464px;width:21px;height:18px;background:#ffb0b0"><span class="num" style="right:6px">4</span></div>
<div class="cell" style="left:129px;top:464px;width:70px;height:18px;background:#ffb0b0"><span class="num" style="right:6px">5.95s</span></div>
<div class="cell" style="left:200px;top:464px;width:65px;height:18px;background:#ffb0b0"><span class="num" style="right:6px">13.9s</span></div>
<div class="sub" style="top:464px;height:18px"><span class="pkg">Bio::EnsEMBL::Variation::BaseVariationFeatureOverlapAllele::</span><span class="lnk">feature</span></div>
<div class="cell" style="left:0px;top:483px;width:75px;height:18px;background:#ffb0b0"><span class="num" style="right:6px">988958</span></div>
<div class="cell" style="left:76px;top:483px;width:30px;height:18px;background:#ffb0b0"><span class="num" style="right:6px">11</span></div>
<div class="cell" style="left:107px;top:483px;width:21px;height:18px;background:#ffb0b0"><span class="num" style="right:6px">5</span></div>
<div class="cell" style="left:129px;top:483px;width:70px;height:18px;background:#ffb0b0"><span class="num" style="right:6px">3.49s</span></div>
<div class="cell" style="left:200px;top:483px;width:65px;height:18px;background:#ffb0b0"><span class="num" style="right:6px">4.40s</span></div>
<div class="sub" style="top:483px;height:18px"><span class="pkg">Bio::EnsEMBL::Exon::</span><span class="lnk">start</span></div>
<div class="cell" style="left:0px;top:502px;width:75px;height:18px;background:#ffb0b0"><span class="num" style="right:6px">836649</span></div>
<div class="cell" style="left:76px;top:502px;width:30px;height:18px;background:#ffb0b0"><span class="num" style="right:6px">3</span></div>
<div class="cell" style="left:107px;top:502px;width:21px;height:18px;background:#ffdcb0"><span class="num" style="right:6px">2</span></div>
<div class="cell" style="left:129px;top:502px;width:70px;height:18px;background:#ffb0b0"><span class="num" style="right:6px">3.18s</span></div>
<div class="cell" style="left:200px;top:502px;width:65px;height:18px;background:#ffb0b0"><span class="num" style="right:6px">7.72s</span></div>
<div class="sub" style="top:502px;height:18px"><span class="pkg">Bio::EnsEMBL::Variation::BaseTranscriptVariation::</span><span class="lnk">feature</span></div>
<div class="cell" style="left:0px;top:521px;width:75px;height:18px;background:#ffb0b0"><span class="num" style="right:6px">384632</span></div>
<div class="cell" style="left:76px;top:521px;width:30px;height:18px;background:#ffb0b0"><span class="num" style="right:6px">15</span></div>
<div class="cell" style="left:107px;top:521px;width:21px;height:18px;background:#ffb0b0"><span class="num" style="right:6px">3</span></div>
<div class="cell" style="left:129px;top:521px;width:70px;height:18px;background:#ffb0b0"><span class="num" style="right:6px">3.16s</span></div>
<div class="cell" style="left:200px;top:521px;width:65px;height:18px;background:#ffb0b0"><span class="num" style="right:6px">7.87s</span></div>
<div class="sub" style="top:521px;height:18px"><span class="pkg">Bio::EnsEMBL::Variation::BaseTranscriptVariationAllele::</span><span class="lnk">transcript</span></div>
<div class="gl" style="top:368px"></div>
<div class="gl" style="top:387px"></div>
<div class="gl" style="top:406px"></div>
<div class="gl" style="top:425px"></div>
<div class="gl" style="top:444px"></div>
<div class="gl" style="top:463px"></div>
<div class="gl" style="top:482px"></div>
<div class="gl" style="top:501px"></div>
<div class="gl" style="top:520px"></div>
<div class="gl" style="top:539px"></div>
<div class="vgl" style="left:75px"></div>
<div class="vgl" style="left:106px"></div>
<div class="vgl" style="left:128px"></div>
<div class="vgl" style="left:199px"></div>
<div class="vgl" style="left:265px"></div>
<div id="bubble"></div>
<div id="sb"></div>
<div id="sbt1"></div>
<div id="sbt2"></div>
</body></html>
